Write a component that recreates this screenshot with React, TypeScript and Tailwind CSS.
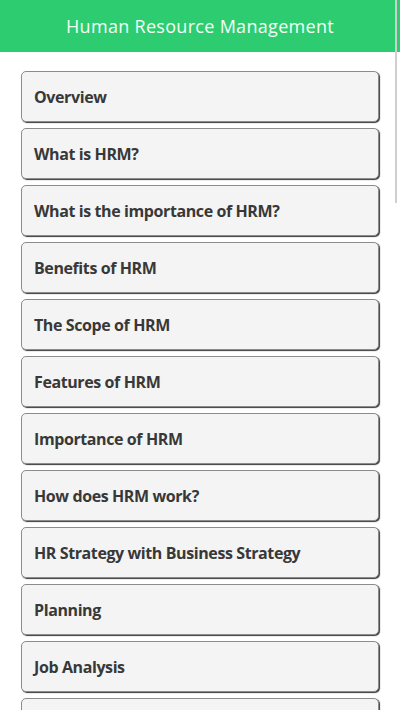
const ITEMS = [
  'Overview',
  'What is HRM?',
  'What is the importance of HRM?',
  'Benefits of HRM',
  'The Scope of HRM',
  'Features of HRM',
  'Importance of HRM',
  'How does HRM work?',
  'HR Strategy with Business Strategy',
  'Planning',
  'Job Analysis',
  'Recruitment',
];

export default function App() {
  return (
    <div
      className="relative w-[400px] h-[710px] overflow-hidden bg-white"
      style={{ fontFamily: '"Open Sans", "Noto Sans", sans-serif' }}
    >
      <header className="h-[52px] bg-[#2ecc71] flex items-center justify-center">
        <h1 className="text-[18px] text-[#f2fff6] tracking-[0.3px]">Human Resource Management</h1>
      </header>

      <div className="pt-[19px] px-[21px] flex flex-col gap-[6px]">
        {ITEMS.map(label => (
          <div
            key={label}
            className="h-[51px] shrink-0 flex items-center px-[12px] rounded-[5px] bg-[#f4f4f4] border border-[#8c8c8c] shadow-[1px_1px_1px_#3a3a3a]"
          >
            <span className="text-[16px] font-bold text-[#383838] tracking-[-0.4px]">{label}</span>
          </div>
        ))}
      </div>

      {/* thin overlay scrollbar */}
      <div className="absolute right-[3px] top-0 w-[2px] h-[203px] bg-[#cfcfcf]" />
    </div>
  );
}
